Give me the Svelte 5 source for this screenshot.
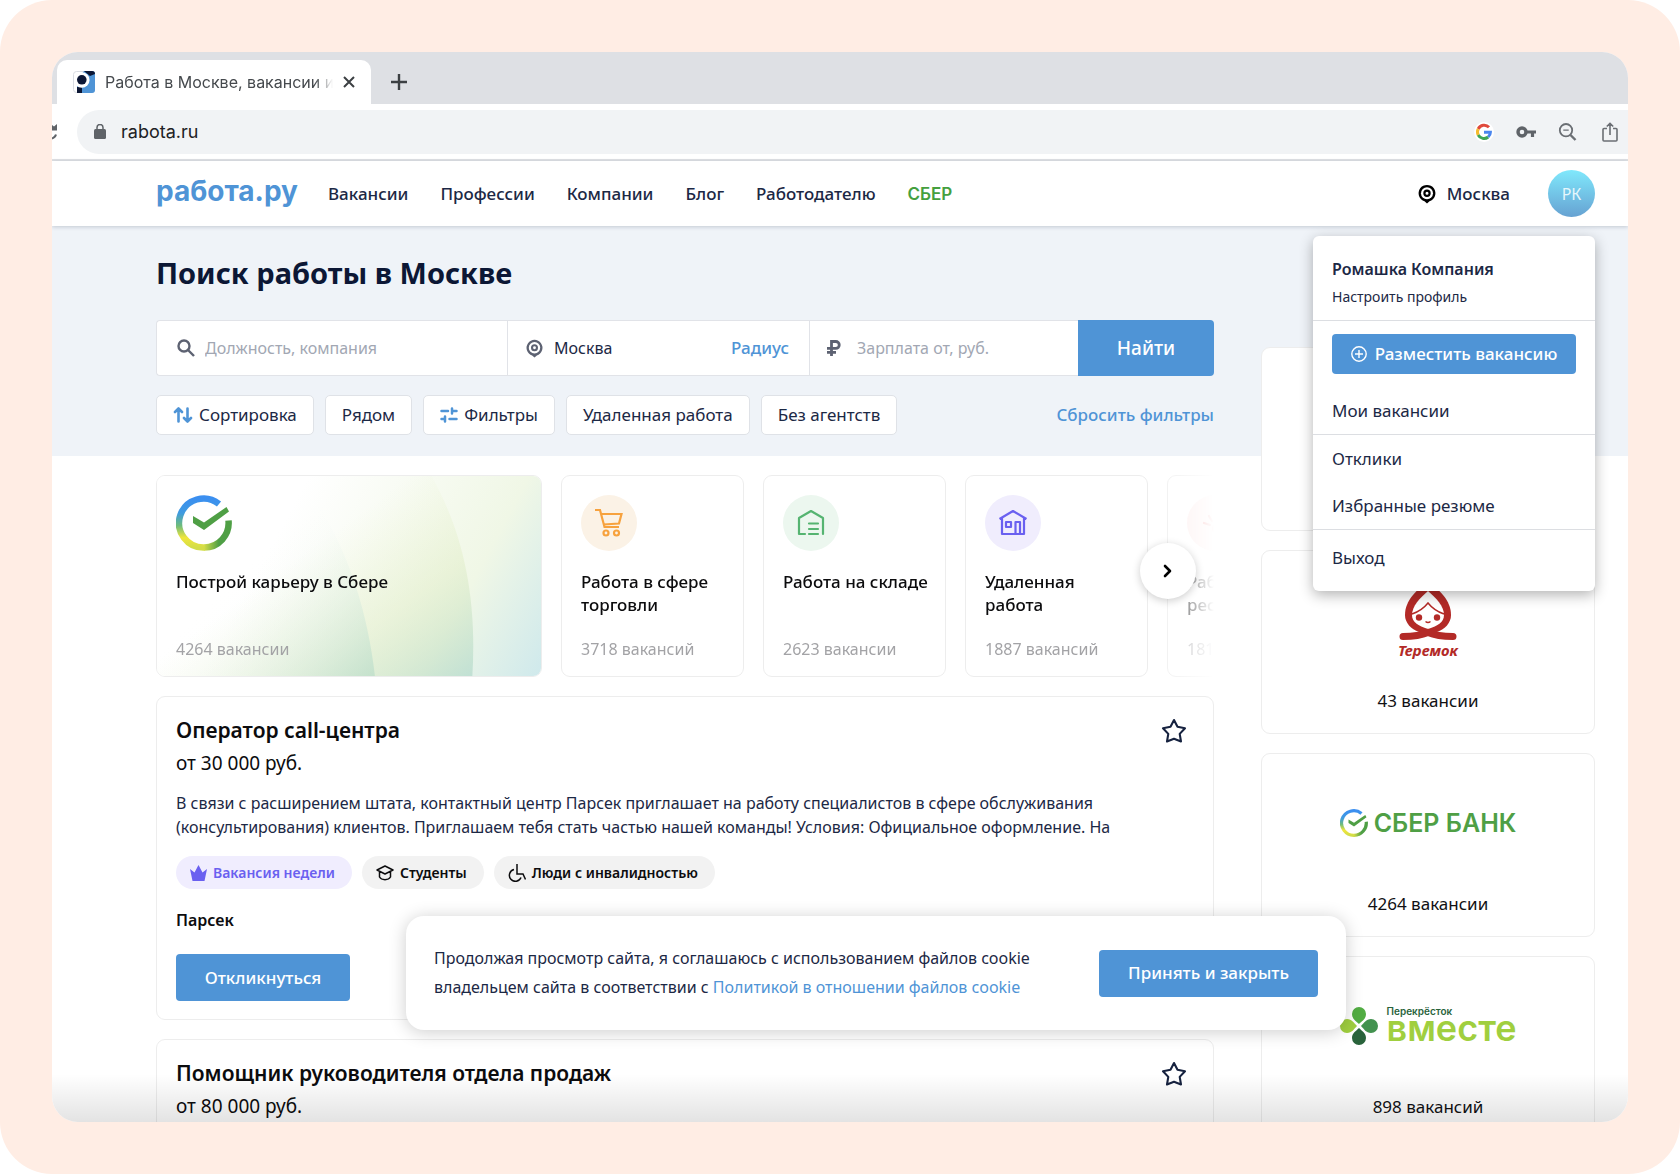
<script>
  let searchText = $state('')
  let city = $state('Москва')
  let salaryFrom = $state('')

  const navLinks = ['Вакансии', 'Профессии', 'Компании', 'Блог', 'Работодателю']

  const categories = [
    { title: 'Работа в сфере торговли', count: '3718 вакансий', icon: 'cart' },
    { title: 'Работа на складе', count: '2623 вакансии', icon: 'warehouse' },
    { title: 'Удаленная работа', count: '1887 вакансий', icon: 'house' },
    { title: 'Работа в ресторане', count: '1819 вакансий', icon: 'food' }
  ]

  const companies = [
    { logo: 'none', count: '' },
    { logo: 'teremok', count: '43 вакансии' },
    { logo: 'sber', count: '4264 вакансии' },
    { logo: 'vmeste', count: '898 вакансий' }
  ]

  const vacancies = [
    {
      title: 'Оператор call-центра',
      salary: 'от 30 000 руб.',
      text: 'В связи с расширением штата, контактный центр Парсек приглашает на работу специалистов в сфере обслуживания (консультирования) клиентов. Приглашаем тебя стать частью нашей команды! Условия: Официальное оформление. На',
      company: 'Парсек',
      tags: [
        { label: 'Вакансия недели', icon: 'crown' },
        { label: 'Студенты', icon: 'cap' },
        { label: 'Люди с инвалидностью', icon: 'wheelchair' }
      ]
    },
    { title: 'Помощник руководителя отдела продаж', salary: 'от 80 000 руб.', tags: [] }
  ]
</script>

{#snippet sberMark(size, id)}
  <svg width={size} height={size} viewBox="0 0 56 56" fill="none" aria-hidden="true">
    <defs>
      <linearGradient id="{id}-left" x1="0" y1="0" x2="0" y2="1">
        <stop offset="0" stop-color="#3b8ff0" />
        <stop offset="0.3" stop-color="#3f9be0" />
        <stop offset="0.55" stop-color="#6dbb7d" />
        <stop offset="0.8" stop-color="#f0e63c" />
        <stop offset="1" stop-color="#d3dd48" />
      </linearGradient>
      <linearGradient id="{id}-right" x1="0" y1="0" x2="1" y2="0">
        <stop offset="0" stop-color="#d3dd48" />
        <stop offset="0.6" stop-color="#4f9f45" />
      </linearGradient>
    </defs>
    <path d="M28 52.5A24.5 24.5 0 0 0 52.5 25.5" stroke="url(#{id}-right)" stroke-width="6.5" />
    <path d="M43 9A24.5 24.5 0 1 0 28.5 52.5" stroke="url(#{id}-left)" stroke-width="6.5" />
    <path d="M17 21l11 6.5L50.5 12l2.5 4.5L28 35 17 28z" fill="#4f9f45" />
  </svg>
{/snippet}

{#snippet pin(size)}
  <svg width={size} height={size} viewBox="0 0 20 20" fill="none" stroke="currentColor" aria-hidden="true">
    <path d="M10 19.5l-2.5-2.2a8.4 8.4 0 1 1 5 0z" fill="currentColor" stroke="none" />
    <circle cx="10" cy="9.2" r="6" fill="#fff" stroke="none" />
    <circle cx="10" cy="9.2" r="2.6" stroke-width="2.2" />
  </svg>
{/snippet}

<div class="frame">
  <div class="browser">
    <div class="tabbar">
      <div class="tab">
        <svg width="22" height="22" viewBox="0 0 22 22" aria-hidden="true">
          <rect x="0.5" y="0.5" width="21" height="21" rx="3" fill="#fff" stroke="#d9dce2" />
          <path d="M11 0h8a3 3 0 0 1 3 3v16a3 3 0 0 1-3 3H4V8z" fill="#4f94d6" />
          <path d="M11 0h8a3 3 0 0 1 3 3l-5 2zM4 16h5v6H4z" fill="#0c1735" />
          <circle cx="8.8" cy="9" r="7.8" fill="#fff" />
          <circle cx="8.8" cy="8.8" r="4.8" fill="#0c1735" />
        </svg>
        <span class="tab-title">Работа в Москве, вакансии и</span>
        <button class="icon-btn" aria-label="Закрыть вкладку">
          <svg width="12" height="12" viewBox="0 0 12 12" stroke="#3c4043" stroke-width="2"><path d="M1 1l10 10M11 1L1 11" /></svg>
        </button>
      </div>
      <button class="icon-btn" aria-label="Новая вкладка">
        <svg width="16" height="16" viewBox="0 0 16 16" stroke="#3c4043" stroke-width="2.4"><path d="M8 0v16M0 8h16" /></svg>
      </button>
    </div>

    <div class="toolbar">
      <svg width="6" height="16" viewBox="0 0 6 16" fill="none" aria-hidden="true">
        <path d="M0 1l2 1.5L5 0v6.5H0z" fill="#5f6368" />
        <path d="M0 14.5c2-.8 3.5-2 4-4" stroke="#5f6368" stroke-width="2" />
      </svg>
      <div class="address">
        <svg width="12" height="15" viewBox="0 0 12 15" fill="none" aria-hidden="true">
          <rect y="5" width="12" height="10" rx="1.5" fill="#5f6368" />
          <path d="M3 6V3.5a3 3 0 0 1 6 0V6" stroke="#5f6368" stroke-width="1.5" />
        </svg>
        <span class="url">rabota.ru</span>
        <div class="address-icons">
          <svg width="20" height="20" viewBox="0 0 20 20" fill="none" aria-hidden="true">
            <circle cx="10" cy="10" r="10" fill="#fff" />
            <g stroke-width="3">
              <path d="M15 5.3A6.6 6.6 0 0 0 4.2 7" stroke="#e04a3c" />
              <path d="M4.2 7a6.6 6.6 0 0 0 0 6" stroke="#f6bb2e" />
              <path d="M4.2 13a6.6 6.6 0 0 0 10 2" stroke="#3fa656" />
              <path d="M14.2 15a6.6 6.6 0 0 0 2.2-4.8H10" stroke="#4a86ee" />
            </g>
          </svg>
          <svg width="20" height="12" viewBox="0 0 20 12" fill="none" aria-hidden="true">
            <circle cx="6" cy="6" r="4" stroke="#5f6368" stroke-width="3.4" />
            <path d="M10 6h10M16.5 6v5" stroke="#5f6368" stroke-width="3.2" />
          </svg>
          <svg width="20" height="18" viewBox="0 0 20 18" fill="none" stroke="#6b6f74" stroke-width="1.8" aria-hidden="true">
            <circle cx="8" cy="7.2" r="6.2" /><path d="M12.5 12l5 5" stroke-width="2.4" /><path d="M5.3 7.2h5.4" stroke-width="1.2" />
          </svg>
          <svg width="20" height="20" viewBox="0 0 20 20" fill="none" stroke="#6b6f74" stroke-width="1.6" aria-hidden="true">
            <path d="M7 6.5H4a1 1 0 0 0-1 1V18a1 1 0 0 0 1 1h12a1 1 0 0 0 1-1V7.5a1 1 0 0 0-1-1h-3M10 13V1.5M6.8 4.5L10 1.3l3.2 3.2" />
          </svg>
        </div>
      </div>
    </div>

    <div class="page">
      <header class="header">
        <a class="logo" href="#home">работа.ру</a>
        <nav class="nav">
          {#each navLinks as link}
            <a href="#nav">{link}</a>
          {/each}
          <a class="nav-sber" href="#sber">СБЕР</a>
        </nav>
        <a class="city" href="#city">{@render pin(20)} Москва</a>
        <div class="account">
          <button class="avatar">РК</button>
          <div class="menu">
            <div class="menu-head">
              <strong>Ромашка Компания</strong>
              <a href="#profile">Настроить профиль</a>
            </div>
            <div class="menu-group">
              <button class="btn btn-place">
                <svg width="16" height="16" viewBox="0 0 16 16" fill="none" stroke="currentColor" stroke-width="1.4" aria-hidden="true">
                  <circle cx="8" cy="8" r="7.2" /><path d="M8 4v8M4 8h8" />
                </svg>
                Разместить вакансию
              </button>
              <a href="#my">Мои вакансии</a>
            </div>
            <div class="menu-group">
              <a href="#replies">Отклики</a>
              <a href="#resumes">Избранные резюме</a>
            </div>
            <div class="menu-group menu-exit">
              <a href="#exit">Выход</a>
            </div>
          </div>
        </div>
      </header>

      <div class="content">
        <main class="main">
          <section class="hero">
            <h1>Поиск работы в Москве</h1>
            <form class="search">
              <label class="field field-query">
                <svg width="18" height="18" viewBox="0 0 18 18" fill="none" stroke="currentColor" stroke-width="2.4" aria-hidden="true">
                  <circle cx="7" cy="7" r="5.5" /><path d="M11 11l6 6" />
                </svg>
                <input type="text" placeholder="Должность, компания" aria-label="Должность, компания" bind:value={searchText} />
              </label>
              <div class="field field-city">
                {@render pin(19)}
                <input type="text" aria-label="Город" bind:value={city} />
                <a href="#radius">Радиус</a>
              </div>
              <label class="field field-salary">
                <svg width="14" height="16" viewBox="0 0 14 16" fill="none" stroke="currentColor" stroke-width="2.8" aria-hidden="true">
                  <path d="M4.5 16V1.5h4.3a3.4 3.4 0 0 1 0 6.9H0M0 12.3h9" />
                </svg>
                <input type="text" placeholder="Зарплата от, руб." aria-label="Зарплата от, руб." bind:value={salaryFrom} />
              </label>
              <button type="button" class="btn btn-find">Найти</button>
            </form>
            <div class="filters">
              <button class="chip">
                <svg width="20" height="16" viewBox="0 0 20 16" fill="none" stroke="#4f94d6" stroke-width="2.6" stroke-linecap="round" stroke-linejoin="round" aria-hidden="true">
                  <path d="M5.5 14.5V2M2 5l3.5-3.5L9 5M14.5 1.5V14M11 11l3.5 3.5L18 11" />
                </svg>
                Сортировка
              </button>
              <button class="chip">Рядом</button>
              <button class="chip">
                <svg width="18" height="16" viewBox="0 0 18 16" fill="none" stroke="#4f94d6" stroke-width="2.5" stroke-linecap="round" aria-hidden="true">
                  <path d="M1.5 4H8M12 4h4.5M12 1.5v5M1.5 12H5M5 9.5v5M9.5 12h7" />
                </svg>
                Фильтры
              </button>
              <button class="chip">Удаленная работа</button>
              <button class="chip">Без агентств</button>
              <a class="reset" href="#reset">Сбросить фильтры</a>
            </div>
          </section>

          <section class="carousel">
            <div class="track">
              <article class="category category-sber">
                <svg class="rays" viewBox="0 0 386 202" preserveAspectRatio="none" aria-hidden="true">
                  <defs>
                    <linearGradient id="ray-base" gradientUnits="userSpaceOnUse" x1="120" y1="60" x2="386" y2="202">
                      <stop offset="0" stop-color="#fff" />
                      <stop offset="0.65" stop-color="#f0f7e6" />
                      <stop offset="1" stop-color="#cfe9ec" />
                    </linearGradient>
                    <linearGradient id="ray-mid" gradientUnits="userSpaceOnUse" x1="200" y1="40" x2="318" y2="202">
                      <stop offset="0" stop-color="#e6f0c0" stop-opacity="0" />
                      <stop offset="0.5" stop-color="#dceabf" stop-opacity="0.4" />
                      <stop offset="1" stop-color="#b8dccf" stop-opacity="0.8" />
                    </linearGradient>
                    <linearGradient id="ray-near" gradientUnits="userSpaceOnUse" x1="100" y1="80" x2="219" y2="202">
                      <stop offset="0" stop-color="#fff" stop-opacity="0" />
                      <stop offset="1" stop-color="#b9dcc8" stop-opacity="0.7" />
                    </linearGradient>
                  </defs>
                  <rect width="386" height="202" fill="url(#ray-base)" />
                  <path d="M0 0h276c30 54 46 118 41 202H0z" fill="url(#ray-mid)" />
                  <path d="M0 0h140c40 45 70 120 79 202H0z" fill="url(#ray-near)" />
                </svg>
                {@render sberMark(56, 'career')}
                <h3>Построй карьеру в Сбере</h3>
                <span>4264 вакансии</span>
              </article>
              {#each categories as category}
                <article class="category">
                  <div class="category-icon {category.icon}">
                    <svg width="30" height="30" viewBox="0 0 30 30" fill="none" stroke="currentColor" stroke-width="2.2" aria-hidden="true">
                      {#if category.icon === 'cart'}
                        <path d="M1 2h5l4.5 17H25M7 6h20.5L25 15.5l-15.5 1" />
                        <circle cx="12" cy="25" r="2.5" /><circle cx="22.5" cy="25" r="2.5" />
                      {:else if category.icon === 'warehouse'}
                        <path d="M9 26H3V10l12-7 12 7v16M13 15.5h9M13 21h9M13 26h9" stroke-linecap="round" stroke-linejoin="round" />
                      {:else if category.icon === 'house'}
                        <path d="M1.5 11L15 3l13.5 8M4 10v16h22V10M8 14h5v5H8zM17.5 26V14H22v12" stroke-linejoin="round" />
                      {:else}
                        <path d="M4 15l6 2M9 8l3 5M23 3v12M15 24a4 4 0 1 1 6-4" stroke-linecap="round" />
                      {/if}
                    </svg>
                  </div>
                  <h3>{category.title}</h3>
                  <span>{category.count}</span>
                </article>
              {/each}
            </div>
            <button class="next" aria-label="Дальше">
              <svg width="10" height="14" viewBox="0 0 10 14" fill="none" stroke="#000" stroke-width="2.6" stroke-linecap="round" stroke-linejoin="round"><path d="M2 2l5 5-5 5" /></svg>
            </button>
          </section>

          {#each vacancies as vacancy}
            <article class="vacancy">
              <div class="vacancy-head">
                <h2>{vacancy.title}</h2>
                <button class="icon-btn" aria-label="В избранное">
                  <svg width="26" height="26" viewBox="0 0 26 26" fill="none" stroke="#16223f" stroke-width="2.1" stroke-linejoin="round">
                    <path d="M13 2l3.5 6.8 7.5 1.5-5.3 5.6 1.3 7.6-7-2.7-7 2.7 1.3-7.6L2 10.3l7.5-1.5z" />
                  </svg>
                </button>
              </div>
              <p class="salary">{vacancy.salary}</p>
              {#if vacancy.text}
                <p class="text">{vacancy.text}</p>
                <ul class="tags">
                  {#each vacancy.tags as tag}
                    <li class="tag {tag.icon}">
                      {#if tag.icon === 'crown'}
                        <svg width="17" height="16" viewBox="0 0 17 16" fill="currentColor" aria-hidden="true"><path d="M0 4l4.5 3.5L8.5 0l4 7.5L17 4l-2.5 12h-12z" /></svg>
                      {:else if tag.icon === 'cap'}
                        <svg width="18" height="16" viewBox="0 0 18 16" fill="none" stroke="currentColor" stroke-width="1.5" stroke-linejoin="round" aria-hidden="true"><path d="M9 1l8 4-8 4-8-4zM3.5 6.5V12c2 3.5 9 3.5 11 0V6.5" /></svg>
                      {:else}
                        <svg width="18" height="18" viewBox="0 0 18 18" fill="none" stroke="currentColor" stroke-width="1.5" aria-hidden="true"><path d="M9 0v10h6l2.5 5.5M6 5.5a6 6 0 1 0 7 8" /></svg>
                      {/if}
                      {tag.label}
                    </li>
                  {/each}
                </ul>
                <p class="company">{vacancy.company}</p>
                <button class="btn btn-reply">Откликнуться</button>
              {/if}
            </article>
          {/each}
        </main>

        <aside class="aside">
          {#each companies as company}
            <a class="company-card" href="#company">
              <div class="company-logo">
                {#if company.logo === 'teremok'}
                  <div class="teremok">
                    <svg width="58" height="60" viewBox="0 0 58 60" fill="none" aria-hidden="true">
                      <path d="M29 1C18 10 6 20 6 35c0 8 6 14 14 17h18c8-3 14-9 14-17C52 20 40 10 29 1z" fill="#b32a27" />
                      <path d="M29 11C21 18 13 26 13 35c0 7 6 11 16 14 10-3 16-7 16-14 0-9-8-17-16-24z" fill="#fff" />
                      <path d="M13 34c6-2 12-6 16-11 4 5 10 9 16 11" stroke="#b32a27" stroke-width="1.5" />
                      <circle cx="20" cy="37.5" r="3.2" fill="#b32a27" /><circle cx="38" cy="37.5" r="3.2" fill="#b32a27" />
                      <path d="M26.5 41.5q2.5 2 5 0" stroke="#b32a27" stroke-width="1.5" />
                      <path d="M4 56.5c10 0 18-1 25-4 7 3 15 4 25 4" stroke="#b32a27" stroke-width="7" stroke-linecap="round" />
                    </svg>
                    <span>Теремок</span>
                  </div>
                {:else if company.logo === 'sber'}
                  <div class="sber">
                    {@render sberMark(28, 'bank')}
                    <span>СБЕР БАНК</span>
                  </div>
                {:else if company.logo === 'vmeste'}
                  <div class="vmeste">
                    <svg width="38" height="38" viewBox="0 0 38 38" aria-hidden="true">
                      <path d="M19 17c-3-3-7-5-7-10a7 7 0 0 1 14 0c0 5-4 7-7 10z" fill="#52ad43" />
                      <path d="M21 19c3-3 5-7 10-7a7 7 0 0 1 0 14c-5 0-7-4-10-7z" fill="#43924f" />
                      <path d="M19 21c3 3 7 5 7 10a7 7 0 0 1-14 0c0-5 4-7 7-10z" fill="#29633b" />
                      <path d="M17 19c-3 3-5 7-10 7a7 7 0 0 1 0-14c5 0 7 4 10 7z" fill="#a0cf3f" />
                    </svg>
                    <div class="vmeste-text">
                      <small>Перекрёсток</small>
                      <span>вместе</span>
                    </div>
                  </div>
                {/if}
              </div>
              <span>{company.count}</span>
            </a>
          {/each}
        </aside>
      </div>
    </div>

    <div class="cookie">
      <p>
        Продолжая просмотр сайта, я соглашаюсь с использованием файлов cookie владельцем сайта в соответствии с <a href="#policy">Политикой в отношении файлов cookie</a>
      </p>
      <button class="btn btn-accept">Принять и закрыть</button>
    </div>
  </div>
</div>

<style>
  :global(body) {
    margin: 0;
    background: #fff;
  }

  .frame {
    --blue: #4f94d6;
    --navy: #1c2845;
    --line: #ededed;
    height: 100vh;
    padding: 52px;
    border-radius: 52px;
    background: #ffede4;
    font-family: 'Noto Sans', sans-serif;
    font-size: 16px;
    line-height: 24px;
    color: var(--navy);
  }

  .frame,
  .frame :global(*) {
    box-sizing: border-box;
  }

  a {
    color: inherit;
    text-decoration: none;
  }

  button,
  input {
    font: inherit;
    color: inherit;
  }

  button {
    padding: 0;
    border: 0;
    background: none;
    cursor: pointer;
  }

  h1,
  h2,
  h3,
  p,
  ul {
    margin: 0;
    padding: 0;
  }

  .browser {
    position: relative;
    display: flex;
    flex-direction: column;
    height: 100%;
    overflow: hidden;
    border-radius: 26px;
    background: #fff;
  }

  .browser::after {
    content: '';
    position: absolute;
    inset: auto 0 0;
    height: 48px;
    background: linear-gradient(rgba(0, 0, 0, 0), rgba(0, 0, 0, 0.11));
    pointer-events: none;
  }

  .icon-btn {
    display: flex;
  }

  .tabbar {
    flex: none;
    display: flex;
    align-items: center;
    gap: 20px;
    height: 52px;
    padding: 8px 5px 0;
    background: #dee0e4;
  }

  .tab {
    display: flex;
    align-items: center;
    gap: 10px;
    width: 314px;
    height: 44px;
    padding: 0 16px;
    border-radius: 10px 10px 0 0;
    background: #fff;
  }

  .tab-title {
    flex: 1;
    overflow: hidden;
    font-family: Inter, sans-serif;
    font-size: 16px;
    white-space: nowrap;
    color: #45494d;
    mask-image: linear-gradient(90deg, #000 92%, transparent);
  }

  .toolbar {
    flex: none;
    display: flex;
    align-items: center;
    gap: 19px;
    height: 57px;
    border-bottom: 2px solid #dfe1e4;
  }

  .address {
    flex: 1;
    display: flex;
    align-items: center;
    gap: 15px;
    height: 44px;
    padding: 0 8px 0 17px;
    border-radius: 22px 0 0 22px;
    background: #f1f3f5;
  }

  .url {
    font-family: Inter, sans-serif;
    font-size: 18px;
    color: #202124;
  }

  .address-icons {
    display: flex;
    align-items: center;
    gap: 22px;
    margin-left: auto;
  }

  .header {
    position: relative;
    z-index: 2;
    display: flex;
    align-items: center;
    height: 65px;
    padding: 0 33px 0 104px;
    background: #fff;
    box-shadow: 0 1px 4px rgba(21, 33, 63, 0.2);
  }

  .logo {
    width: 172px;
    padding-bottom: 6px;
    font-family: Inter, sans-serif;
    font-size: 28px;
    font-weight: 700;
    color: var(--blue);
  }

  .nav {
    display: flex;
    gap: 32px;
    font-size: 17px;
    font-weight: 500;
  }

  .nav-sber {
    font-family: Inter, sans-serif;
    font-weight: 600;
    color: #45a03f;
  }

  .city {
    display: flex;
    align-items: center;
    gap: 10px;
    margin: 0 38px 0 auto;
    font-size: 17px;
    font-weight: 500;
  }

  .city :global(svg) {
    color: #000;
  }

  .account {
    position: relative;
  }

  .avatar {
    width: 47px;
    height: 47px;
    border-radius: 50%;
    background: linear-gradient(#80e8fc, #66a2d2);
    color: #e6f6fc;
  }

  .menu {
    position: absolute;
    top: 66px;
    right: 0;
    width: 282px;
    border-radius: 6px;
    background: #fff;
    box-shadow: 0 4px 14px rgba(0, 0, 0, 0.3);
  }

  .menu-head,
  .menu-group {
    display: flex;
    flex-direction: column;
    padding: 0 19px;
  }

  .menu-head {
    gap: 4px;
    padding-top: 21px;
    padding-bottom: 11px;
  }

  .menu-head strong {
    font-weight: 600;
  }

  .menu-head a {
    font-size: 14px;
  }

  .menu-group {
    border-top: 1px solid #dcdee2;
  }

  .menu-group a {
    font-size: 17px;
    line-height: 47px;
  }

  .menu-exit {
    padding-top: 4px;
    padding-bottom: 10px;
  }

  .btn {
    border-radius: 4px;
    background: var(--blue);
    color: #fff;
    font-size: 17px;
    font-weight: 500;
  }

  .btn-place {
    display: flex;
    align-items: center;
    justify-content: center;
    gap: 8px;
    height: 40px;
    margin: 13px 0;
  }

  .content {
    display: grid;
    grid-template-columns: 1fr 334px;
    gap: 47px;
    padding: 0 33px 0 104px;
    background: linear-gradient(#eff3f8 230px, #fff 230px);
  }

  .main {
    min-width: 0;
  }

  .hero {
    height: 230px;
    padding-top: 29px;
  }

  h1 {
    font-size: 29px;
    line-height: 36px;
    font-weight: 700;
    color: #0c1735;
  }

  .search {
    display: grid;
    grid-template-columns: 351fr 302fr 269fr 136px;
    height: 56px;
    margin: 29px 0 19px;
  }

  .field {
    display: flex;
    align-items: center;
    gap: 10px;
    min-width: 0;
    padding: 0 20px;
    border: 1px solid #e1e3e8;
    border-right: 0;
    background: #fff;
    color: #5d6272;
  }

  .field :global(svg) {
    flex: none;
  }

  .field input {
    flex: 1;
    min-width: 0;
    padding: 0;
    border: 0;
    outline: 0;
    background: none;
    color: var(--navy);
  }

  .field input::placeholder {
    color: #a2a7b3;
    opacity: 1;
  }

  .field a {
    color: var(--blue);
    font-size: 17px;
    font-weight: 500;
  }

  .field-query {
    border-radius: 4px 0 0 4px;
  }

  .field-city {
    padding-left: 17px;
  }

  .field-salary {
    gap: 16px;
    padding-left: 17px;
  }

  .btn-find {
    border-radius: 0 4px 4px 0;
    font-size: 19px;
  }

  .filters {
    display: flex;
    align-items: center;
    gap: 11px;
    font-size: 17px;
  }

  .chip {
    display: flex;
    align-items: center;
    gap: 6px;
    height: 40px;
    padding: 0 16px;
    border: 1px solid #dfe2e7;
    border-radius: 5px;
    background: #fff;
  }

  .reset {
    margin-left: auto;
    color: var(--blue);
    font-weight: 500;
  }

  .carousel {
    position: relative;
    margin-top: 19px;
  }

  .track {
    display: flex;
    gap: 19px;
    overflow: hidden;
    mask-image: linear-gradient(90deg, #000 94%, transparent);
  }

  .category {
    position: relative;
    flex: none;
    display: flex;
    flex-direction: column;
    width: 183px;
    height: 202px;
    padding: 19px 19px 18px;
    overflow: hidden;
    border: 1px solid var(--line);
    border-radius: 9px;
  }

  .category-sber {
    width: 386px;
  }

  .category > :global(*) {
    z-index: 1;
  }

  .category > .rays {
    position: absolute;
    z-index: 0;
    inset: 0;
    width: 100%;
    height: 100%;
  }

  .category h3 {
    margin: 19px -8px 0 0;
    font-size: 17px;
    line-height: 23px;
    font-weight: 500;
    color: #0c0c0e;
  }

  .category span {
    margin-top: auto;
    line-height: 18px;
    color: #a3a3a6;
  }

  .category-icon {
    display: grid;
    place-items: center;
    width: 56px;
    height: 56px;
    border-radius: 50%;
  }

  .cart {
    background: #fbf2e6;
    color: #f7a23e;
  }

  .warehouse {
    background: #ecf7ef;
    color: #55b471;
  }

  .house {
    background: #f0edfd;
    color: #6a60f0;
  }

  .food {
    background: #fdeceb;
    color: #f08080;
  }

  .next {
    position: absolute;
    top: 68px;
    right: 18px;
    display: grid;
    place-items: center;
    width: 56px;
    height: 56px;
    border-radius: 50%;
    background: #fff;
    box-shadow: 0 2px 8px rgba(0, 0, 0, 0.2);
  }

  .vacancy {
    margin-top: 19px;
    padding: 18px 19px;
    border: 1px solid var(--line);
    border-radius: 9px;
    color: #0c0c0e;
  }

  .vacancy-head {
    display: flex;
    align-items: center;
    justify-content: space-between;
    padding-right: 7px;
  }

  h2 {
    font-size: 21px;
    line-height: 31px;
    font-weight: 600;
  }

  .salary {
    margin-bottom: 11px;
    font-size: 19px;
    line-height: 34px;
  }

  .text {
    color: var(--navy);
  }

  .tags {
    display: flex;
    gap: 10px;
    margin: 17px 0 19px;
    list-style: none;
  }

  .tag {
    display: flex;
    align-items: center;
    gap: 6px;
    height: 33px;
    padding: 0 17px 0 14px;
    border-radius: 17px;
    background: #f2f2f2;
    font-size: 14px;
    font-weight: 600;
  }

  .tag.crown {
    background: #f0edfe;
    color: #6a60f0;
  }

  .company {
    font-weight: 600;
  }

  .btn-reply {
    width: 174px;
    height: 47px;
    margin-top: 22px;
  }

  .aside {
    display: flex;
    flex-direction: column;
    gap: 19px;
    padding-top: 121px;
  }

  .company-card {
    display: flex;
    flex-direction: column;
    align-items: center;
    height: 184px;
    border: 1px solid var(--line);
    border-radius: 9px;
    background: #fff;
    color: #111114;
    font-size: 17px;
  }

  .company-logo {
    display: grid;
    place-items: center;
    height: 138px;
  }

  .teremok {
    display: flex;
    flex-direction: column;
    align-items: center;
    color: #b32a27;
    font-size: 15px;
    font-style: italic;
    font-weight: 700;
    line-height: 20px;
  }

  .sber {
    display: flex;
    align-items: center;
    gap: 6px;
    color: #4f9f45;
    font-family: Inter, sans-serif;
    font-size: 25px;
    font-weight: 600;
  }

  .vmeste {
    display: flex;
    align-items: center;
    gap: 9px;
  }

  .vmeste-text {
    display: flex;
    flex-direction: column;
    padding-bottom: 6px;
    font-family: Inter, sans-serif;
    font-weight: 600;
  }

  .vmeste small {
    font-size: 10px;
    line-height: 10px;
    color: #29633b;
  }

  .vmeste span {
    font-size: 36px;
    line-height: 24px;
    color: #a0cf3f;
  }

  .cookie {
    position: absolute;
    z-index: 3;
    right: 282px;
    bottom: 92px;
    left: 354px;
    display: flex;
    align-items: center;
    justify-content: space-between;
    gap: 40px;
    height: 114px;
    padding: 0 28px;
    border-radius: 18px;
    background: #fff;
    box-shadow: 0 2px 18px rgba(0, 0, 0, 0.2);
  }

  .cookie p {
    line-height: 29px;
  }

  .cookie a {
    color: var(--blue);
  }

  .btn-accept {
    flex: none;
    width: 219px;
    height: 47px;
  }
</style>
